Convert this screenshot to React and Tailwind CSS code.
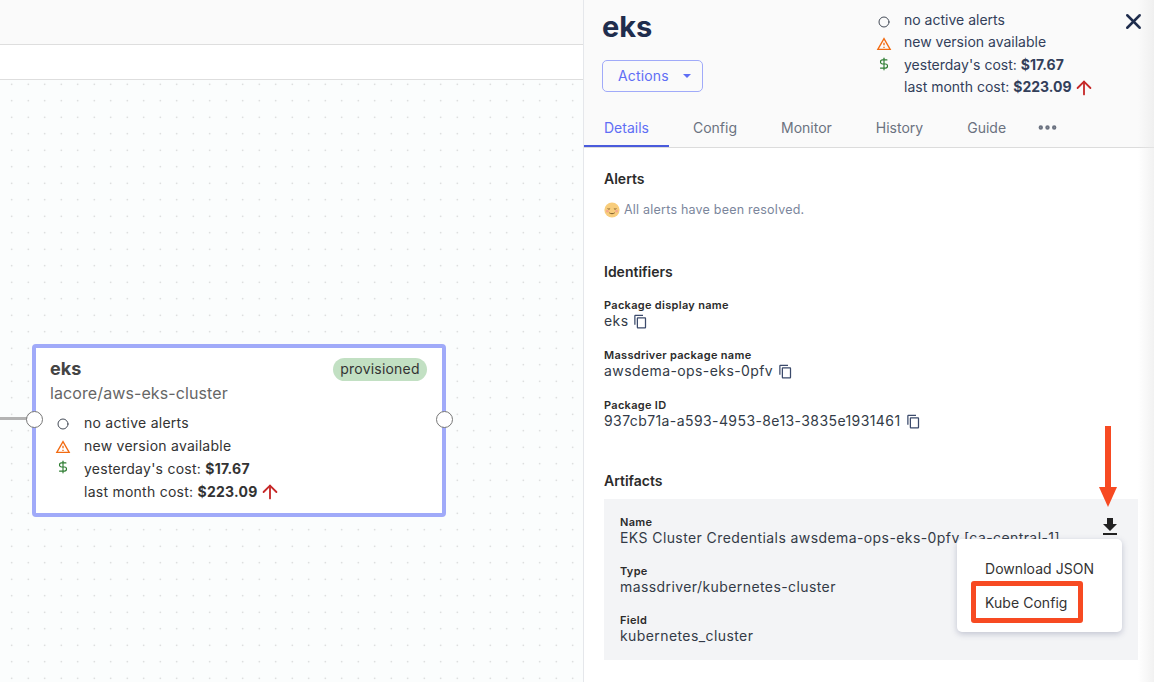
import React from 'react';
import { X, ArrowUp, DollarSign, Circle, MoreHorizontal } from 'lucide-react';
import { MdContentCopy, MdFileDownload, MdOutlineWarningAmber } from 'react-icons/md';

const font = { fontFamily: 'Inter, sans-serif' };

const StatusRows = ({ iconCol, rowClass }) => (
  <div className={`flex flex-col text-[14px] ${rowClass}`}>
    <div className="flex items-center">
      <span className={`${iconCol} flex justify-center`}>
        <Circle className="w-[12px] h-[12px] text-[#444b57] mt-[3px]" strokeWidth={2} />
      </span>
      <span>no active alerts</span>
    </div>
    <div className="flex items-center">
      <span className={`${iconCol} flex justify-center`}>
        <MdOutlineWarningAmber className="w-[16px] h-[16px] text-[#f26b12] mt-[2px]" />
      </span>
      <span>new version available</span>
    </div>
    <div className="flex items-center">
      <span className={`${iconCol} flex justify-center`}>
        <DollarSign className="w-[14px] h-[14px] text-[#2e7d32] -mt-[3px]" strokeWidth={2} />
      </span>
      <span>yesterday's cost: <b className="font-bold">$17.67</b></span>
    </div>
    <div className="flex items-center">
      <span className={iconCol} />
      <span>last month cost: <b className="font-bold">$223.09</b></span>
      <ArrowUp className="w-[22px] h-[22px] text-[#c62828] ml-[1px]" strokeWidth={2} />
    </div>
  </div>
);

const Field = ({ label, value, copy, className }) => (
  <div className={className}>
    <div className="text-[11px] leading-[16px] font-semibold tracking-[0.3px] text-[#2b2b2b]">{label}</div>
    <div className="flex items-center -mt-[1px] text-[14px] leading-[17px] tracking-[0.41px] text-[#333b47] whitespace-nowrap">
      {value}
      {copy && <MdContentCopy className="w-[15px] h-[15px] ml-[5px] mt-[2px] text-[#3b4a6b]" />}
    </div>
  </div>
);

const App = () => {
  const tabs = ['Config', 'Monitor', 'History', 'Guide'];

  return (
    <div className="flex w-[1154px] h-[682px] overflow-hidden bg-white" style={font}>
      {/* Canvas side */}
      <div className="w-[583px] h-full flex flex-col shrink-0">
        <div className="h-[45px] bg-[#fafafa] border-b border-[#dedede] shrink-0" />
        <div className="h-[35px] bg-white border-b border-[#dedede] shrink-0" />
        <div className="relative flex-1 bg-[#fbfdfd] bg-[radial-gradient(#c9cccc_0.8px,transparent_1px)] bg-[size:16.5px_16.5px] bg-[position:3.5px_-4px]">
          <div className="absolute left-0 top-[337px] w-[28px] h-[3px] bg-[#b3b3b3]" />
          <div className="absolute left-[32px] top-[264px] w-[414px] h-[173px] bg-white border-[4px] border-[#a0aaf9] rounded-[4px] px-[14px] pt-[9px] text-[#333]">
            <div className="flex items-center justify-between pr-[1px]">
              <span className="text-[18px] leading-[24px] font-bold text-[#444]">eks</span>
              <span className="h-[23px] w-[94px] pb-[1px] justify-center flex items-center rounded-full bg-[#c2e0c3] text-[14px] tracking-[0.2px] text-[#333]">provisioned</span>
            </div>
            <div className="text-[16px] leading-[24px] tracking-[0.1px] text-[#666]">lacore/aws-eks-cluster</div>
            <div className="mt-[6px] ml-[-2px]">
              <StatusRows iconCol="w-[36px] pr-[6px]" rowClass="leading-[23px] tracking-[0.25px]" />
            </div>
            <div className="absolute -left-[10px] top-[63px] w-[17px] h-[17px] rounded-full bg-white border border-[#777]" />
            <div className="absolute -right-[11px] top-[63px] w-[17px] h-[17px] rounded-full bg-white border border-[#777]" />
          </div>
        </div>
      </div>

      {/* Details panel */}
      <div className="relative w-[571px] h-full border-l border-[#e5e7eb] flex flex-col text-[#1f2d4d]">
        <div className="h-[148px] bg-[#fafafa] border-b border-[#dcdcdc] shrink-0 flex flex-col">
          <div className="flex h-[107px] pl-[18px]">
            <div className="w-[282px]">
              <div className="text-[29px] leading-[34px] font-bold text-[#1f2d4d] mt-[10px]">eks</div>
              <button className="mt-[16px] w-[101px] h-[32px] pb-[1px] rounded-[5px] border border-[#a0aaf9] flex items-center pl-[15px] text-[14px] text-[#5f6ef5] tracking-[0.15px]">
                Actions
                <span className="ml-[14px] mt-[1px] w-0 h-0 border-x-[4px] border-x-transparent border-t-[4px] border-t-[#5f6ef5]" />
              </button>
            </div>
            <div className="mt-[8.75px] text-[#333f5a]">
              <StatusRows iconCol="w-[29px] pr-[11px] -ml-[9px]" rowClass="leading-[22.5px]" />
            </div>
          </div>
          <div className="flex gap-[4px] items-stretch h-[40px] text-[14px] text-[#6b7280]">
            <div className="px-[20px] h-full pt-[10px] border-b-[2px] border-[#4a5bdc] text-[#5f6ef5]">Details</div>
            {tabs.map((t) => (
              <div key={t} className="px-[20px] pt-[10px]">{t}</div>
            ))}
            <MoreHorizontal className="w-[23px] h-[23px] ml-[6px] mt-[9px] text-[#6b7280]" strokeWidth={2.6} />
          </div>
        </div>

        <X className="absolute left-[537px] top-[9px] w-[25px] h-[25px] text-[#1f2d4d]" strokeWidth={2.4} />

        <div className="flex-1 pl-[20px] pr-[16px] text-[#333]">
          <h3 className="mt-[22px] text-[14px] leading-[18px] font-semibold text-[#2b2b2b]">Alerts</h3>
          <div className="mt-[14px] flex items-center text-[12.5px] leading-[16px] tracking-[0.22px] text-[#7b869c]">
            <svg viewBox="0 0 16 16" className="w-[16px] h-[16px] mr-[4px]">
              <circle cx="8" cy="8" r="7.6" fill="#f8cd7c" />
              <path d="M3.6 6.6c.7.6 1.8.6 2.5 0M9.9 6.6c.7.6 1.8.6 2.5 0" stroke="#7a5a28" strokeWidth="1" fill="none" />
              <path d="M5.3 10.8c1.5 1.2 3.9 1.2 5.4 0" stroke="#7a5a28" strokeWidth="1" fill="none" />
              <circle cx="3.4" cy="9.2" r="1.4" fill="#f4a98a" />
              <circle cx="12.6" cy="9.2" r="1.4" fill="#f4a98a" />
            </svg>
            All alerts have been resolved.
          </div>
          <h3 className="mt-[45px] text-[14px] leading-[18px] font-semibold text-[#2b2b2b]">Identifiers</h3>
          <Field className="mt-[16px]" label="Package display name" value="eks" copy />
          <Field className="mt-[18px]" label="Massdriver package name" value="awsdema-ops-eks-0pfv" copy />
          <Field className="mt-[18px]" label="Package ID" value="937cb71a-a593-4953-8e13-3835e1931461" copy />
          <h3 className="mt-[43px] text-[14px] leading-[18px] font-semibold text-[#2b2b2b]">Artifacts</h3>
          <div className="mt-[9px] h-[161px] bg-[#f3f4f6] pl-[16px] pt-[15px]">
            <Field label="Name" value="EKS Cluster Credentials awsdema-ops-eks-0pfv [ca-central-1]" />
            <Field className="mt-[17px]" label="Type" value="massdriver/kubernetes-cluster" />
            <Field className="mt-[17px]" label="Field" value="kubernetes_cluster" />
          </div>
        </div>

        {/* scroll shadow */}
        <div className="absolute right-0 top-0 bottom-0 w-[16px] bg-gradient-to-r from-transparent to-[#e9e9e9]/60" />

        {/* Download button + menu */}
        <MdFileDownload className="absolute left-[514px] top-[515px] w-[24px] h-[24px] text-[#222]" />
        <div className="absolute left-[373px] top-[539px] w-[165px] h-[93px] bg-white rounded-[5px] shadow-[0_2px_6px_rgba(60,70,110,0.28)] pt-[19px] pl-[28px] text-[14px] leading-[22px] tracking-[0.05px] text-[#333]">
          <div>Download JSON</div>
          <div className="mt-[12px]">Kube Config</div>
          <div className="absolute left-[14px] top-[42px] w-[112px] h-[42px] border-[5px] border-[#f74a22] rounded-[3px]" />
        </div>

        {/* annotation arrow */}
        <svg className="absolute left-[513px] top-[425px] w-[22px] h-[84px]" viewBox="0 0 22 84">
          <rect x="8" y="1" width="6" height="62" fill="#f74a22" />
          <polygon points="2,62 20,62 11,82" fill="#f74a22" />
        </svg>
      </div>
    </div>
  );
};

export default App;
